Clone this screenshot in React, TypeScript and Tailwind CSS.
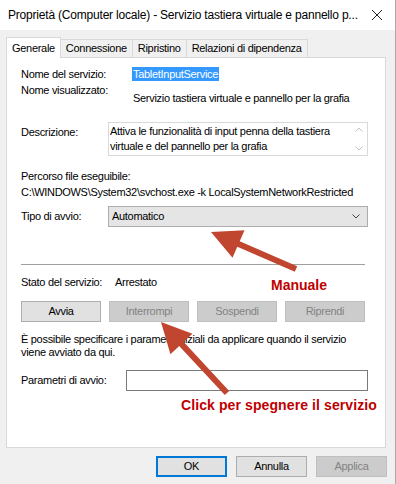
import React from 'react'

const font = { fontFamily: '"Liberation Sans", Arial, sans-serif' }

function Btn({ label, disabled, primary, className = '' }: { label: string; disabled?: boolean; primary?: boolean; className?: string }) {
  const base = disabled
    ? 'bg-[#cccccc] border-[#bfbfbf] text-[#838383]'
    : primary
      ? 'bg-[#e1e1e1] border-[#0078d7] text-black'
      : 'bg-[#e1e1e1] border-[#adadad] text-black'
  return (
    <div className={`h-[21px] flex items-center justify-center ${primary ? 'border-2' : 'border'} ${base} ${className}`}>
      {label}
    </div>
  )
}

function Arrow({ x1, y1, x2, y2 }: { x1: number; y1: number; x2: number; y2: number }) {
  // tip at x1,y1, tail at x2,y2
  const dx = x2 - x1
  const dy = y2 - y1
  const len = Math.hypot(dx, dy)
  const ux = dx / len
  const uy = dy / len
  const px = -uy
  const py = ux
  const hl = 30
  const hw = 15
  const bx = x1 + ux * hl
  const by = y1 + uy * hl
  const head = `${x1},${y1} ${bx + px * hw},${by + py * hw} ${bx - px * hw},${by - py * hw}`
  return (
    <g>
      <line x1={x1 + ux * 20} y1={y1 + uy * 20} x2={x2} y2={y2} stroke="#c1462f" strokeWidth={6} />
      <polygon points={head} fill="#c1462f" />
    </g>
  )
}

export default function App() {
  return (
    <div className="relative w-[396px] h-[484px] bg-[#f0f0f0] overflow-hidden text-[11px] tracking-[-0.3px] text-black border-r border-[#a9a9a9] whitespace-nowrap" style={font}>
      {/* title bar */}
      <div className="h-[30px] bg-white flex items-center justify-between pl-[8px] pr-[12px]">
        <span className="text-[12px] tracking-[-0.2px] text-[#000]">Proprietà (Computer locale) - Servizio tastiera virtuale e pannello p...</span>
        <svg width="12" height="12" viewBox="0 0 12 12" className="ml-2">
          <path d="M1 1L11 11M11 1L1 11" stroke="#222" strokeWidth="1" />
        </svg>
      </div>

      {/* tabs */}
      <div className="flex items-end pl-[6px] h-[27px] pt-[6px]">
        <div className="h-[21px] px-[5px] bg-white border border-b-0 border-[#d9d9d9] flex items-center relative top-[1px] z-10">Generale</div>
        <div className="h-[18px] px-[5px] border border-l-0 border-b-0 border-[#d9d9d9] flex items-center">Connessione</div>
        <div className="h-[18px] px-[5px] border border-l-0 border-b-0 border-[#d9d9d9] flex items-center">Ripristino</div>
        <div className="h-[18px] px-[5px] border border-l-0 border-b-0 border-[#d9d9d9] flex items-center">Relazioni di dipendenza</div>
      </div>

      {/* panel */}
      <div className="ml-[6px] w-[380px] h-[391px] bg-white border border-[#d9d9d9] pl-[14px] pr-[17px] pt-[8px] flex flex-col">
        <div className="flex h-[16px] items-center">
          <span className="w-[111px]">Nome del servizio:</span>
          <span className="bg-[#3399ff] text-white px-[1px] leading-[14px]">TabletInputService</span>
        </div>
        <div className="flex h-[24px] items-start">
          <span className="w-[112px]">Nome visualizzato:</span>
          <span className="mt-[8px]">Servizio tastiera virtuale e pannello per la grafia</span>
        </div>
        <div className="flex mt-[16px] items-start">
          <span className="w-[87px] mt-[2px]">Descrizione:</span>
          <div className="w-[260px] h-[34px] border border-[#d9d9d9] flex">
            <div className="flex-1 leading-[15px] pl-[1px] pt-[1px] whitespace-normal">Attiva le funzionalità di input penna della tastiera virtuale e del pannello per la grafia</div>
            <div className="w-[17px] flex flex-col justify-between items-center py-[4px]">
              <svg width="8" height="5" viewBox="0 0 8 5"><path d="M0.5 4.5L4 1L7.5 4.5" stroke="#c2c2c2" fill="none" /></svg>
              <svg width="8" height="5" viewBox="0 0 8 5"><path d="M0.5 0.5L4 4L7.5 0.5" stroke="#c2c2c2" fill="none" /></svg>
            </div>
          </div>
        </div>
        <div className="mt-[12px] leading-[16px]">Percorso file eseguibile:</div>
        <div className="leading-[16px]">C:\WINDOWS\System32\svchost.exe -k LocalSystemNetworkRestricted</div>
        <div className="flex mt-[6px] items-center">
          <span className="w-[87px]">Tipo di avvio:</span>
          <div className="w-[260px] h-[21px] bg-[#e5e5e5] border border-[#adadad] flex items-center justify-between pl-[3px] pr-[7px]">
            <span>Automatico</span>
            <svg width="8" height="5" viewBox="0 0 8 5"><path d="M0.5 0.5L4 4L7.5 0.5" stroke="#444" fill="none" /></svg>
          </div>
        </div>
        <div className="mt-[37px] h-[1px] w-[344px] bg-[#a0a0a0]" />
        <div className="flex mt-[9px] h-[16px] items-center">
          <span className="w-[94px]">Stato del servizio:</span>
          <span>Arrestato</span>
        </div>
        <div className="flex mt-[11px] gap-[8px]">
          <Btn label="Avvia" className="w-[80px]" />
          <Btn label="Interrompi" disabled className="w-[80px]" />
          <Btn label="Sospendi" disabled className="w-[80px]" />
          <Btn label="Riprendi" disabled className="w-[80px]" />
        </div>
        <div className="mt-[11px] leading-[13px] w-[344px] whitespace-normal">È possibile specificare i parametri iniziali da applicare quando il servizio viene avviato da qui.</div>
        <div className="flex mt-[11px] items-center">
          <span className="w-[105px]">Parametri di avvio:</span>
          <div className="w-[243px] h-[21px] border border-[#7a7a7a] bg-white" />
        </div>
      </div>

      {/* bottom buttons */}
      <div className="flex justify-end gap-[9px] pr-[8px] mt-[8px]">
        <Btn label="OK" primary className="w-[71px]" />
        <Btn label="Annulla" className="w-[71px]" />
        <Btn label="Applica" disabled className="w-[71px]" />
      </div>

      {/* annotations */}
      <span className="absolute left-[271px] top-[275px] text-[14px] font-bold text-[#c00000] tracking-[0px]">Manuale</span>
      <span className="absolute left-[181px] top-[395px] text-[14px] font-bold text-[#c00000] tracking-[0.1px]">Click per spegnere il servizio</span>
      <svg className="absolute left-0 top-0 pointer-events-none" width="396" height="484">
        <Arrow x1={211} y1={232} x2={296} y2={269} />
        <Arrow x1={161} y1={322} x2={227} y2={393} />
      </svg>
    </div>
  )
}
